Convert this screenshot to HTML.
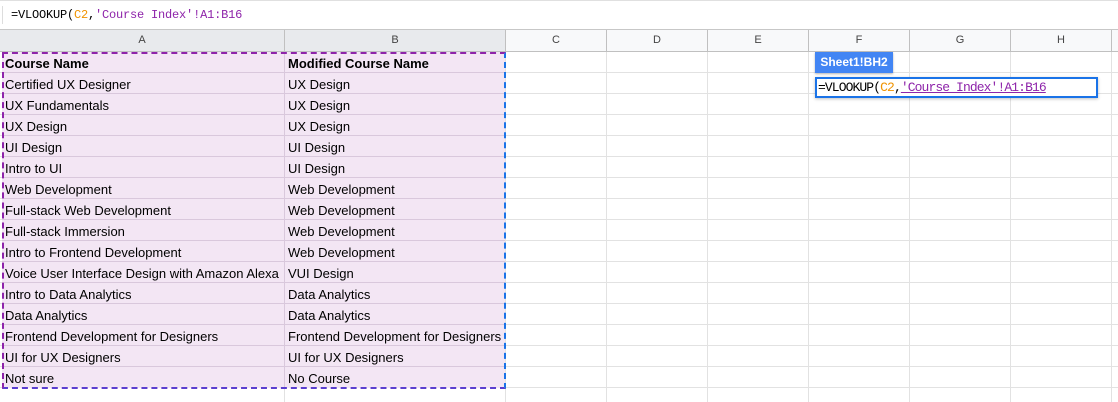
<!DOCTYPE html><html><head><style>
body{margin:0;width:1118px;height:402px;overflow:hidden;background:#fff;font-family:"Liberation Sans",Arial,sans-serif;position:relative}
.fb{position:absolute;left:0;top:0;width:1118px;height:30px;border-top:1px solid #e0e0e0;border-bottom:1px solid #c7c7c7;box-sizing:border-box}
.fb .t{position:absolute;left:11px;top:7px;font:12px "Liberation Mono",monospace;color:#000;letter-spacing:-0.2px}
.fb .bar{position:absolute;left:2px;top:5px;width:1px;height:18px;background:#ddd}
.o{color:#f09300}.p{color:#8e24aa}
.hdr{position:absolute;top:30px;height:22px;background:#f8f9fa;border-right:1px solid #c0c0c0;border-bottom:1px solid #c0c0c0;box-sizing:border-box;font-size:11px;color:#444;text-align:center;line-height:21px}
.hdr.s{background:#e8eaed}
.vl{position:absolute;top:52px;width:1px;height:350px;background:#e2e2e2}
.hl{position:absolute;left:0;width:1118px;height:1px;background:#e2e2e2}
.sel{position:absolute;left:2px;top:52px;width:503px;height:336px;background:#f3e6f4}
.sel .hl{background:#d9c8dc;width:503px}
.sel .vl{background:#d9c8dc;top:0;height:336px}
.dash{position:absolute;left:2px;top:52px;width:504px;height:337px;box-sizing:border-box;border:2px dashed #8e24aa;border-right-color:#1a73e8;border-bottom-color:#5b3fd0}
.c{position:absolute;font-size:13px;color:#000;line-height:21px;white-space:nowrap}
.b{font-weight:bold}
.tag{position:absolute;left:815px;top:52px;width:78px;height:21px;background:#4285f4;color:#fff;font-weight:bold;font-size:12px;line-height:21px;text-align:center;box-shadow:0 1px 2px rgba(0,0,0,.3)}
.ed{position:absolute;left:815px;top:77px;width:283px;height:21px;border:2px solid #1a73e8;box-sizing:border-box;background:#fff;font:13px "Liberation Mono",monospace;letter-spacing:-0.9px;line-height:17px;padding-left:1px;box-shadow:0 1px 3px rgba(0,0,0,.25);white-space:nowrap}
.u{text-decoration:underline}
</style></head><body>
<div class="fb"><div class="bar"></div><div class="t">=VLOOKUP(<span class="o">C2</span>,<span class="p">'Course Index'!A1:B16</span></div></div>
<div class="hdr s" style="left:0;width:285px">A</div>
<div class="hdr s" style="left:285px;width:221px">B</div>
<div class="hdr" style="left:506px;width:101px">C</div>
<div class="hdr" style="left:607px;width:101px">D</div>
<div class="hdr" style="left:708px;width:101px">E</div>
<div class="hdr" style="left:809px;width:101px">F</div>
<div class="hdr" style="left:910px;width:101px">G</div>
<div class="hdr" style="left:1011px;width:101px">H</div>
<div class="hdr" style="left:1112px;width:10px"></div>
<div class="vl" style="left:284px"></div><div class="vl" style="left:505px"></div><div class="vl" style="left:606px"></div><div class="vl" style="left:707px"></div><div class="vl" style="left:808px"></div><div class="vl" style="left:909px"></div><div class="vl" style="left:1010px"></div><div class="vl" style="left:1111px"></div>
<div class="hl" style="top:72px"></div><div class="hl" style="top:93px"></div><div class="hl" style="top:114px"></div><div class="hl" style="top:135px"></div><div class="hl" style="top:156px"></div><div class="hl" style="top:177px"></div><div class="hl" style="top:198px"></div><div class="hl" style="top:219px"></div><div class="hl" style="top:240px"></div><div class="hl" style="top:261px"></div><div class="hl" style="top:282px"></div><div class="hl" style="top:303px"></div><div class="hl" style="top:324px"></div><div class="hl" style="top:345px"></div><div class="hl" style="top:366px"></div><div class="hl" style="top:387px"></div>
<div class="sel">
<div class="vl" style="left:282px"></div>
<div class="hl" style="top:20px"></div><div class="hl" style="top:41px"></div><div class="hl" style="top:62px"></div><div class="hl" style="top:83px"></div><div class="hl" style="top:104px"></div><div class="hl" style="top:125px"></div><div class="hl" style="top:146px"></div><div class="hl" style="top:167px"></div><div class="hl" style="top:188px"></div><div class="hl" style="top:209px"></div><div class="hl" style="top:230px"></div><div class="hl" style="top:251px"></div><div class="hl" style="top:272px"></div><div class="hl" style="top:293px"></div><div class="hl" style="top:314px"></div>
</div>
<div class="dash"></div>
<div class="c b" style="left:5px;top:53px">Course Name</div><div class="c b" style="left:288px;top:53px">Modified Course Name</div>
<div class="c" style="left:5px;top:74px">Certified UX Designer</div><div class="c" style="left:288px;top:74px">UX Design</div>
<div class="c" style="left:5px;top:95px">UX Fundamentals</div><div class="c" style="left:288px;top:95px">UX Design</div>
<div class="c" style="left:5px;top:116px">UX Design</div><div class="c" style="left:288px;top:116px">UX Design</div>
<div class="c" style="left:5px;top:137px">UI Design</div><div class="c" style="left:288px;top:137px">UI Design</div>
<div class="c" style="left:5px;top:158px">Intro to UI</div><div class="c" style="left:288px;top:158px">UI Design</div>
<div class="c" style="left:5px;top:179px">Web Development</div><div class="c" style="left:288px;top:179px">Web Development</div>
<div class="c" style="left:5px;top:200px">Full-stack Web Development</div><div class="c" style="left:288px;top:200px">Web Development</div>
<div class="c" style="left:5px;top:221px">Full-stack Immersion</div><div class="c" style="left:288px;top:221px">Web Development</div>
<div class="c" style="left:5px;top:242px">Intro to Frontend Development</div><div class="c" style="left:288px;top:242px">Web Development</div>
<div class="c" style="left:5px;top:263px">Voice User Interface Design with Amazon Alexa</div><div class="c" style="left:288px;top:263px">VUI Design</div>
<div class="c" style="left:5px;top:284px">Intro to Data Analytics</div><div class="c" style="left:288px;top:284px">Data Analytics</div>
<div class="c" style="left:5px;top:305px">Data Analytics</div><div class="c" style="left:288px;top:305px">Data Analytics</div>
<div class="c" style="left:5px;top:326px">Frontend Development for Designers</div><div class="c" style="left:288px;top:326px">Frontend Development for Designers</div>
<div class="c" style="left:5px;top:347px">UI for UX Designers</div><div class="c" style="left:288px;top:347px">UI for UX Designers</div>
<div class="c" style="left:5px;top:368px">Not sure</div><div class="c" style="left:288px;top:368px">No Course</div>
<div class="tag">Sheet1!BH2</div>
<div class="ed">=VLOOKUP(<span class="o">C2</span>,<span class="p u">'Course Index'!A1:B16</span></div>
</body></html>
